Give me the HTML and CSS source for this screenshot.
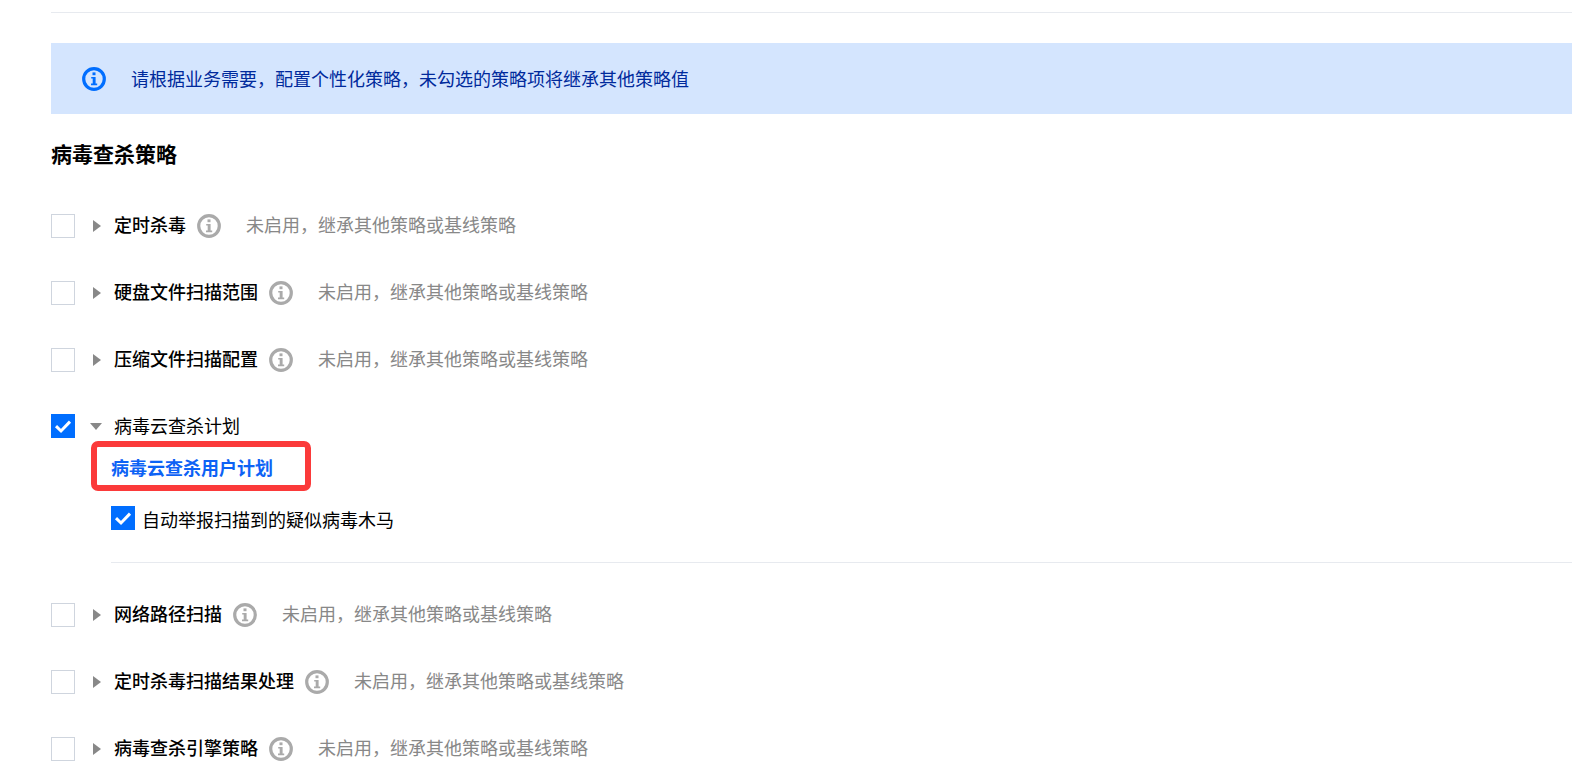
FILE: index.html
```html
<!DOCTYPE html>
<html lang="zh-CN">
<head>
  <meta charset="UTF-8">
  <title>病毒查杀策略</title>
  <link rel="stylesheet" href="styles.css">
</head>
<body>
  <svg class="defs" width="0" height="0">
    <symbol id="icon-info" viewBox="0 0 24 24">
      <circle cx="12" cy="12" r="10.3" fill="none" stroke="currentColor" stroke-width="3.2"/>
      <rect x="10.5" y="5.4" width="3" height="2.8" fill="currentColor"/>
      <path d="M9.2 10h4.4v6.6H15.2v1.6H9v-1.6h1.7v-5H9.2z" fill="currentColor"/>
    </symbol>
    <symbol id="icon-check" viewBox="0 0 24 24">
      <path d="M5 12.2l5 4.8 9-9.4" fill="none" stroke="#fff" stroke-width="3"/>
    </symbol>
  </svg>

  <div class="page">
    <div class="top-line"></div>

    <!-- Notice -->
    <div class="notice">
      <svg class="notice-icon"><use href="#icon-info"/></svg>
      <span class="notice-text">请根据业务需要，配置个性化策略，未勾选的策略项将继承其他策略值</span>
    </div>

    <h2 class="section-title">病毒查杀策略</h2>

    <!-- Policy rows -->
    <div class="policy-row">
      <span class="checkbox"></span>
      <span class="arrow-right"></span>
      <span class="policy-name">定时杀毒</span>
      <svg class="help-icon"><use href="#icon-info"/></svg>
      <span class="policy-hint">未启用，继承其他策略或基线策略</span>
    </div>
    <div class="policy-row">
      <span class="checkbox"></span>
      <span class="arrow-right"></span>
      <span class="policy-name">硬盘文件扫描范围</span>
      <svg class="help-icon"><use href="#icon-info"/></svg>
      <span class="policy-hint">未启用，继承其他策略或基线策略</span>
    </div>
    <div class="policy-row">
      <span class="checkbox"></span>
      <span class="arrow-right"></span>
      <span class="policy-name">压缩文件扫描配置</span>
      <svg class="help-icon"><use href="#icon-info"/></svg>
      <span class="policy-hint">未启用，继承其他策略或基线策略</span>
    </div>

    <!-- Expanded row -->
    <div class="policy-row expanded">
      <span class="checkbox checked"><svg><use href="#icon-check"/></svg></span>
      <span class="arrow-down"></span>
      <span class="policy-name">病毒云查杀计划</span>
    </div>
    <div class="policy-body">
      <div class="plan-title">
        <span>病毒云查杀用户计划</span>
        <div class="highlight-box"></div>
      </div>
      <div class="plan-option">
        <span class="checkbox checked"><svg><use href="#icon-check"/></svg></span>
        <span class="option-label">自动举报扫描到的疑似病毒木马</span>
      </div>
    </div>

    <div class="policy-row">
      <span class="checkbox"></span>
      <span class="arrow-right"></span>
      <span class="policy-name">网络路径扫描</span>
      <svg class="help-icon"><use href="#icon-info"/></svg>
      <span class="policy-hint">未启用，继承其他策略或基线策略</span>
    </div>
    <div class="policy-row">
      <span class="checkbox"></span>
      <span class="arrow-right"></span>
      <span class="policy-name">定时杀毒扫描结果处理</span>
      <svg class="help-icon"><use href="#icon-info"/></svg>
      <span class="policy-hint">未启用，继承其他策略或基线策略</span>
    </div>
    <div class="policy-row">
      <span class="checkbox"></span>
      <span class="arrow-right"></span>
      <span class="policy-name">病毒查杀引擎策略</span>
      <svg class="help-icon"><use href="#icon-info"/></svg>
      <span class="policy-hint">未启用，继承其他策略或基线策略</span>
    </div>
  </div>
</body>
</html>
```

FILE: styles.css
```css
/* Base layout */
html, body {
  margin: 0;
  padding: 0;
  height: 774px;
  overflow: hidden;
  background-color: #fff;
}

body {
  font-family: "Noto Sans CJK SC", "Liberation Sans", sans-serif;
  font-size: 18px;
  color: #000;
}

.defs {
  position: absolute;
}

.page {
  padding: 12px 0 0 51px;
}

.top-line {
  border-top: 1px solid #e7eaef;
}

/* Notice bar */
.notice {
  display: flex;
  align-items: center;
  height: 71px;
  margin-top: 30px;
  background-color: #d4e5fe;
  color: #002a9c;
  font-size: 18px;
}

.notice-icon {
  width: 24px;
  height: 24px;
  margin: 0 25px 0 31px;
  color: #006eff;
}

.notice-text {
  margin-bottom: 2px;
}

.section-title {
  margin: 24px 0 46px;
  font-size: 21px;
  line-height: 30px;
  font-weight: bold;
}

/* Policy rows */
.policy-row {
  display: flex;
  align-items: center;
  height: 24px;
  margin-bottom: 42.8px;
}

.policy-row.expanded {
  margin-bottom: 0;
}

.checkbox {
  flex: none;
  display: block;
  width: 24px;
  height: 24px;
  box-sizing: border-box;
  border: 1px solid #cfd5de;
  background-color: #fff;
}

.checkbox.checked {
  border: none;
  background-color: #006eff;
}

.checkbox svg {
  display: block;
  width: 24px;
  height: 24px;
}

.arrow-right {
  width: 0;
  height: 0;
  margin: 0 13px 0 18px;
  border-top: 6px solid transparent;
  border-bottom: 6px solid transparent;
  border-left: 8px solid #888;
}

.arrow-down {
  width: 0;
  height: 0;
  margin: 0 12px 0 15px;
  border-left: 6.5px solid transparent;
  border-right: 6.5px solid transparent;
  border-top: 7px solid #888;
}

.policy-name {
  margin-bottom: 4px;
  font-size: 18px;
  font-weight: 500;
  line-height: 24px;
  color: #000;
  white-space: nowrap;
}

.expanded .policy-name {
  margin-bottom: 2px;
  font-weight: normal;
}

.help-icon {
  width: 24px;
  height: 24px;
  margin: 0 25px 0 11px;
  color: #aaa;
}

.policy-hint {
  margin-bottom: 4px;
  font-size: 18px;
  line-height: 24px;
  color: #888;
  white-space: nowrap;
}

/* Expanded policy content */
.policy-body {
  margin: 0 0 40px 60px;
  padding-bottom: 31px;
  border-bottom: 1px solid #e7eaef;
}

.plan-title {
  position: relative;
  width: max-content;
  margin-top: 17px;
  font-size: 18px;
  line-height: 24px;
  font-weight: bold;
  color: #0d62f5;
}

.highlight-box {
  position: absolute;
  top: -14px;
  left: -20px;
  width: 220px;
  height: 50px;
  box-sizing: border-box;
  border: 6px solid #fb3a3a;
  border-radius: 7px;
}

.plan-option {
  display: flex;
  align-items: center;
  gap: 7px;
  margin-top: 26px;
}

.option-label {
  padding-top: 2px;
  font-size: 18px;
  line-height: 24px;
  white-space: nowrap;
}
```
